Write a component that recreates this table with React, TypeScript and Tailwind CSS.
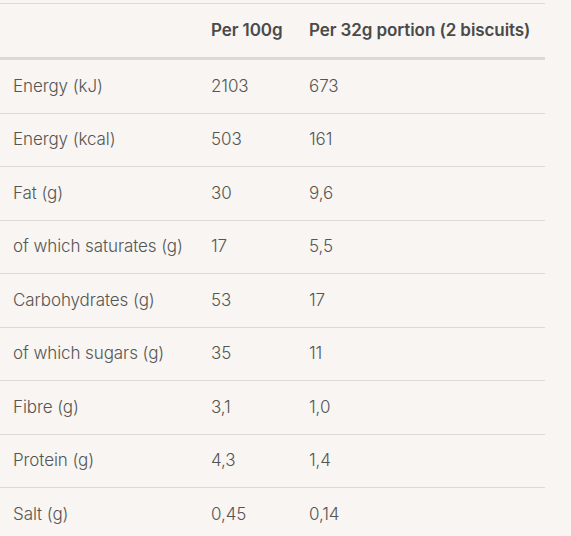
import React from 'react';

type Row = {
  label: string;
  per100: string;
  portion: string;
};

const rows: Row[] = [
  { label: 'Energy (kJ)', per100: '2103', portion: '673' },
  { label: 'Energy (kcal)', per100: '503', portion: '161' },
  { label: 'Fat (g)', per100: '30', portion: '9,6' },
  { label: 'of which saturates (g)', per100: '17', portion: '5,5' },
  { label: 'Carbohydrates (g)', per100: '53', portion: '17' },
  { label: 'of which sugars (g)', per100: '35', portion: '11' },
  { label: 'Fibre (g)', per100: '3,1', portion: '1,0' },
  { label: 'Protein (g)', per100: '4,3', portion: '1,4' },
  { label: 'Salt (g)', per100: '0,45', portion: '0,14' },
];

export default function App() {
  return (
    <div className="min-h-screen bg-[#f8f5f2] pt-[3px] font-['Inter',sans-serif] text-[17px] tracking-[-0.005em]">
      <div className="w-[545px]">
        {/* En-tête */}
        <div className="grid h-[57px] grid-cols-[198px_98px_1fr] items-center border-t border-b-[3px] border-[#ddd9d5] pl-[13px] font-semibold text-[#4a4a4a]">
          <span />
          <span>Per 100g</span>
          <span>Per 32g portion (2 biscuits)</span>
        </div>

        {/* Lignes */}
        {rows.map((row, i) => (
          <div
            key={row.label}
            className={
              i < rows.length - 1
                ? 'grid h-[53.5px] grid-cols-[198px_98px_1fr] items-center border-b border-[#ddd9d5] pl-[13px] font-light text-[#555]'
                : 'grid h-[53.5px] grid-cols-[198px_98px_1fr] items-center pl-[13px] font-light text-[#555]'
            }
          >
            <span>{row.label}</span>
            <span>{row.per100}</span>
            <span>{row.portion}</span>
          </div>
        ))}
      </div>
    </div>
  );
}
